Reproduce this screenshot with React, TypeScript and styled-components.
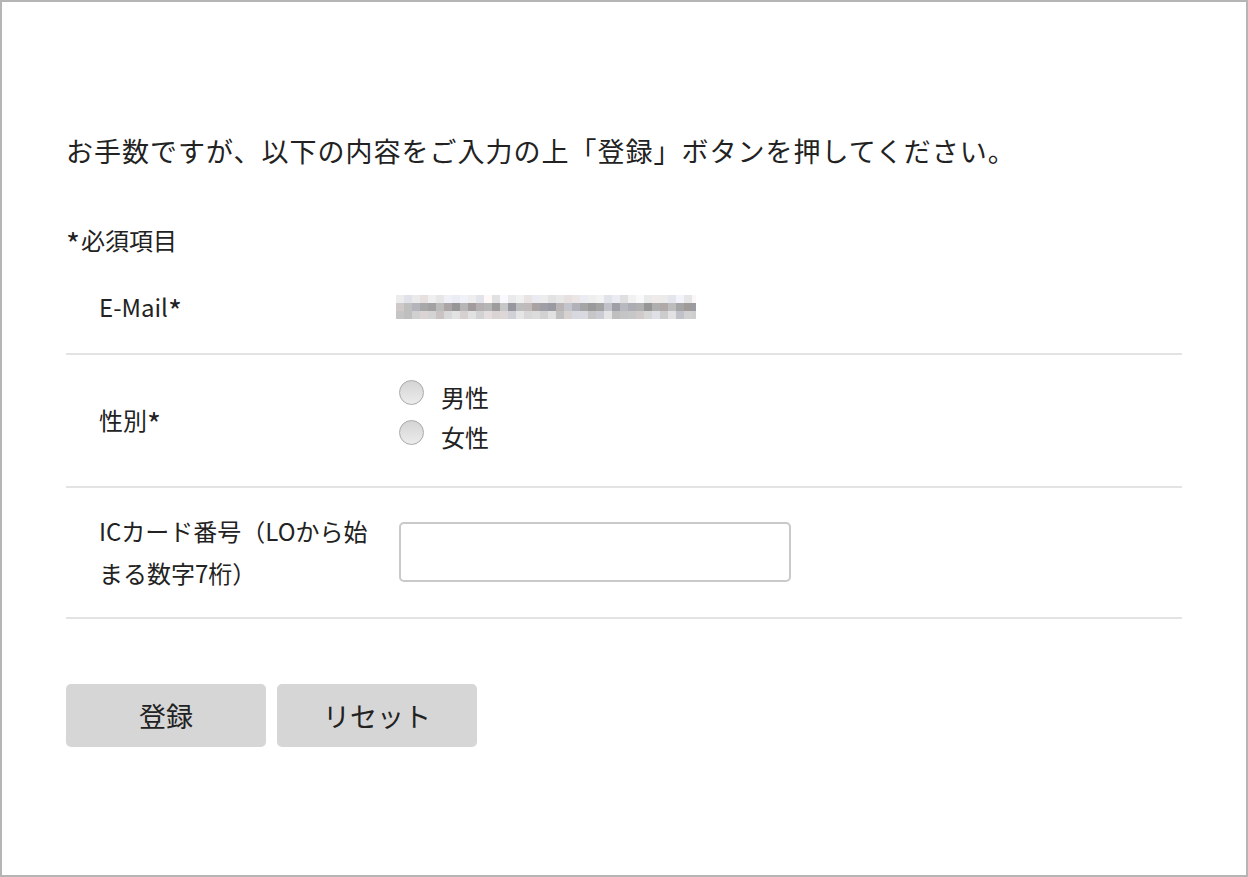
import React from "react";
import styled, { createGlobalStyle } from "styled-components";

const GlobalStyle = createGlobalStyle`
  html, body {
    margin: 0;
    padding: 0;
    background: #ffffff;
  }
  body {
    font-family: "Noto Sans CJK JP", "Noto Sans", sans-serif;
    color: #222222;
  }
  * { box-sizing: border-box; }
`;

const Frame = styled.div`
  width: 1248px;
  height: 877px;
  border: 2px solid #b5b5b5;
  padding: 129px 64px 0 64px;
`;

const Lead = styled.p`
  margin: 0;
  font-size: 27px;
  line-height: 40px;
  letter-spacing: 1px;
`;

const RequiredNote = styled.p`
  margin: 48px 0 0 0;
  font-size: 24px;
  line-height: 42px;
`;

const Star = styled.span`
  display: inline-block;
  font-size: 30px;
  line-height: 20px;
  transform: translateY(6px);
  margin-right: 1px;
`;

const Table = styled.div`
  display: flex;
  flex-direction: column;
`;

const Row = styled.div<{ $pad: string }>`
  display: grid;
  grid-template-columns: 333px 1fr;
  align-items: center;
  padding: ${(p) => p.$pad};
  border-bottom: 2px solid #e3e3e3;
`;

const Label = styled.div`
  padding-left: 33px;
  padding-right: 14px;
  font-size: 24px;
  line-height: 42px;
`;

const Value = styled.div`
  font-size: 24px;
  line-height: 42px;
  display: flex;
  flex-direction: column;
`;

const Blur = styled.svg`
  display: block;
  margin-left: -3px;
`;

const RadioOption = styled.label`
  display: flex;
  align-items: flex-start;
  gap: 17px;
  line-height: 40px;
  font-size: 24px;
`;

const RadioText = styled.span`
  margin-top: -3px;
  margin-bottom: 3px;
`;

const RadioCircle = styled.span`
  width: 25px;
  height: 25px;
  margin-top: 0;
  border-radius: 50%;
  border: 1px solid #a9a9a9;
  background: linear-gradient(#d4d4d4, #ececec);
  flex: none;
`;

const TextInput = styled.input`
  width: 392px;
  height: 60px;
  border: 2px solid #c9c9c9;
  border-radius: 5px;
  background: #ffffff;
  padding: 0 10px;
  font-size: 22px;
  outline: none;
`;

const ButtonRow = styled.div`
  display: flex;
  gap: 11px;
  margin-top: 65px;
`;

const Button = styled.button`
  width: 200px;
  height: 63px;
  border: none;
  border-radius: 5px;
  background: #d6d6d6;
  color: #222222;
  font-family: "Noto Sans CJK JP", "Noto Sans", sans-serif;
  font-size: 27px;
  cursor: pointer;
  padding: 0;
`;

function blurCells() {
  const cols = 38;
  const cells: { x: number; y: number; c: string }[] = [];
  let seed = 7;
  const rnd = () => {
    seed = (seed * 9301 + 49297) % 233280;
    return seed / 233280;
  };
  const ranges = [
    [222, 250],
    [150, 205],
    [190, 230],
  ];
  for (let r = 0; r < 3; r++) {
    for (let i = 0; i < cols; i++) {
      const [lo, hi] = ranges[r];
      const v = Math.round(lo + rnd() * (hi - lo));
      const t = rnd();
      const rr = Math.min(255, v + (t > 0.8 ? 6 : 0));
      const bb = Math.min(255, v + (t < 0.25 ? 8 : 0));
      cells.push({ x: i * 8, y: r * 8, c: `rgb(${rr},${v},${bb})` });
    }
  }
  return cells;
}

const cells = blurCells();

export default function App() {
  return (
    <>
      <GlobalStyle />
      <Frame>
        <Lead>お手数ですが、以下の内容をご入力の上「登録」ボタンを押してください。</Lead>
        <RequiredNote>
          <Star>*</Star>必須項目
        </RequiredNote>
        <Table>
          <Row $pad="25px 0 25px 0">
            <Label>
              E-Mail<Star>*</Star>
            </Label>
            <Value>
              <Blur width="300" height="24" viewBox="0 0 300 24" aria-label="email">
                {cells.map((c, i) => (
                  <rect key={i} x={c.x} y={c.y} width="8" height="8" fill={c.c} />
                ))}
              </Blur>
            </Value>
          </Row>
          <Row $pad="25px 0 26px 0">
            <Label>
              性別<Star>*</Star>
            </Label>
            <Value>
              <RadioOption>
                <RadioCircle />
                <RadioText>男性</RadioText>
              </RadioOption>
              <RadioOption>
                <RadioCircle />
                <RadioText>女性</RadioText>
              </RadioOption>
            </Value>
          </Row>
          <Row $pad="22px 0 23px 0">
            <Label>ICカード番号（LOから始まる数字7桁）</Label>
            <Value>
              <TextInput type="text" />
            </Value>
          </Row>
        </Table>
        <ButtonRow>
          <Button>登録</Button>
          <Button>リセット</Button>
        </ButtonRow>
      </Frame>
    </>
  );
}
